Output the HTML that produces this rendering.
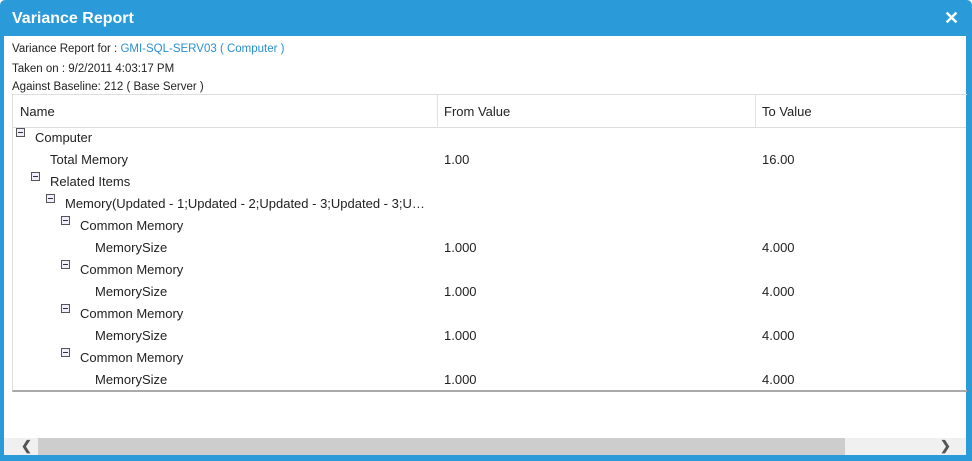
<!DOCTYPE html>
<html><head><style>
body{margin:0;width:972px;height:461px;overflow:hidden;background:#fff;font-family:"Liberation Sans",Arial,sans-serif;}
.frame{position:absolute;left:0;top:0;width:972px;height:461px;background:#2b9ad9;border-radius:5px 5px 0 0;}
.title{position:absolute;left:12px;top:10px;color:#fff;font-weight:bold;font-size:16px;}
.x{position:absolute;left:944px;top:8px;color:#fff;font-weight:bold;font-size:18px;}
.content{position:absolute;left:4px;top:36px;width:962px;height:419px;background:#fff;}
.info{position:absolute;left:12px;font-size:11.5px;color:#222;}
.info a{color:#2b8fd0;}
.tbl{position:absolute;left:12px;top:94px;width:954px;height:295px;border-left:1px solid #ddd;border-top:1px solid #ddd;border-bottom:2px solid #aaa;}
.hdr{position:absolute;left:12px;top:127px;width:954px;height:1px;background:#ddd;}
.vd{position:absolute;top:95px;width:1px;height:32px;background:#e2e2e2;}
.t{position:absolute;font-size:13px;color:#222;white-space:nowrap;}
.ic{position:absolute;width:7px;height:7px;border:1px solid #555;background:#eef;}
.ic:after{content:"";position:absolute;left:1px;top:3px;width:5px;height:1px;background:#333;}
.sb{position:absolute;left:4px;top:438px;width:962px;height:17px;background:#f0f0f0;}
.th{position:absolute;left:38px;top:438px;width:807px;height:17px;background:#cdcdcd;}
.ar{position:absolute;top:438px;font-size:13px;color:#555;font-weight:bold;}
</style></head><body>
<div class="frame"></div>
<div class="title">Variance Report</div>
<div class="x">✕</div>
<div class="content"></div>
<div class="info" style="top:43px">Variance Report for : <a>GMI-SQL-SERV03 ( Computer )</a></div>
<div class="info" style="top:63px">Taken on : 9/2/2011 4:03:17 PM</div>
<div class="info" style="top:81px">Against Baseline: 212 ( Base Server )</div>
<div class="tbl"></div>
<div class="hdr"></div>
<div class="vd" style="left:437px"></div>
<div class="vd" style="left:755px"></div>
<div class="t" style="left:20px;top:104px">Name</div>
<div class="t" style="left:444px;top:104px">From Value</div>
<div class="t" style="left:762px;top:104px">To Value</div>

<div class="ic" style="left:16px;top:128px"></div><div class="t" style="left:35px;top:130px">Computer</div>
<div class="t" style="left:50px;top:152px">Total Memory</div><div class="t" style="left:444px;top:152px">1.00</div><div class="t" style="left:762px;top:152px">16.00</div>
<div class="ic" style="left:31px;top:172px"></div><div class="t" style="left:50px;top:174px">Related Items</div>
<div class="ic" style="left:46px;top:194px"></div><div class="t" style="left:65px;top:196px">Memory(Updated - 1;Updated - 2;Updated - 3;Updated - 3;U…</div>
<div class="ic" style="left:61px;top:216px"></div><div class="t" style="left:80px;top:218px">Common Memory</div>
<div class="t" style="left:95px;top:240px">MemorySize</div><div class="t" style="left:444px;top:240px">1.000</div><div class="t" style="left:762px;top:240px">4.000</div>
<div class="ic" style="left:61px;top:260px"></div><div class="t" style="left:80px;top:262px">Common Memory</div>
<div class="t" style="left:95px;top:284px">MemorySize</div><div class="t" style="left:444px;top:284px">1.000</div><div class="t" style="left:762px;top:284px">4.000</div>
<div class="ic" style="left:61px;top:304px"></div><div class="t" style="left:80px;top:306px">Common Memory</div>
<div class="t" style="left:95px;top:328px">MemorySize</div><div class="t" style="left:444px;top:328px">1.000</div><div class="t" style="left:762px;top:328px">4.000</div>
<div class="ic" style="left:61px;top:348px"></div><div class="t" style="left:80px;top:350px">Common Memory</div>
<div class="t" style="left:95px;top:372px">MemorySize</div><div class="t" style="left:444px;top:372px">1.000</div><div class="t" style="left:762px;top:372px">4.000</div>

<div class="sb"></div><div class="th"></div>
<div class="ar" style="left:21px">❮</div>
<div class="ar" style="left:940px">❯</div>
</body></html>
